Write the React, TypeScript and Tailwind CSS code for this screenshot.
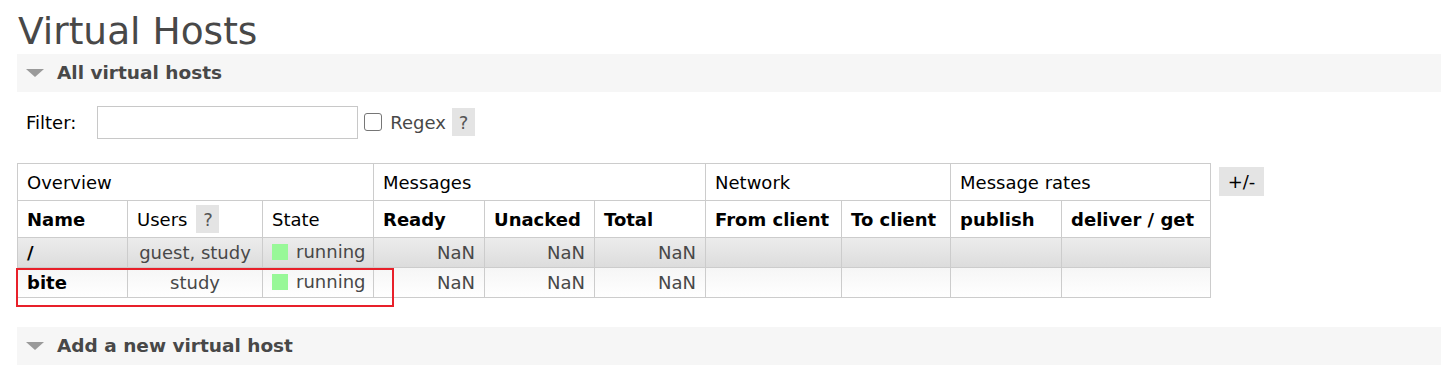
import React from "react";

const font = { fontFamily: '"DejaVu Sans", Verdana, sans-serif' };

const cols = [110, 135, 111, 111, 110, 111, 136, 109, 111, 149];

const groups = [
  { label: "Overview", span: 3 },
  { label: "Messages", span: 3 },
  { label: "Network", span: 2 },
  { label: "Message rates", span: 2 },
];

const rows = [
  { name: "/", users: "guest, study", alt: true },
  { name: "bite", users: "study", alt: false },
];

function Help() {
  return (
    <span className="inline-flex items-center justify-center w-[23px] h-[28px] bg-[#e4e4e4] text-[#555] text-[18px]">
      ?
    </span>
  );
}

function Section({ title }: { title: string }) {
  return (
    <div className="h-[38px] bg-[#f6f6f6] flex items-center">
      <span className="ml-[9px] w-0 h-0 border-l-[9px] border-r-[9px] border-t-[8px] border-l-transparent border-r-transparent border-t-[#9a9a9a]" />
      <span className="ml-[13px] text-[18.5px] font-bold text-[#484848]">{title}</span>
    </div>
  );
}

export default function App() {
  const cell = "border border-[#cccccc] px-[9px] whitespace-nowrap";
  return (
    <div className="bg-white w-[1441px] h-[365px] overflow-hidden pl-[17px] pt-[10px]" style={font}>
      <h1 className="text-[37.5px] leading-[43px] text-[#484848] pl-[1px] mb-[1px]">Virtual Hosts</h1>
      <Section title="All virtual hosts" />

      {/* filter */}
      <div className="flex items-center h-[34px] mt-[13px] text-[18px]">
        <span className="ml-[9px] text-black">Filter:</span>
        <span className="ml-[21px] w-[261px] h-[33px] border border-[#c8c8c8] bg-white" />
        <span className="ml-[6px] w-[18px] h-[18px] border border-[#767676] rounded-[3px] bg-white" />
        <span className="ml-[8px] text-[#484848]">Regex</span>
        <span className="ml-[6px] flex items-center">
          <Help />
        </span>
      </div>

      {/* table */}
      <div className="flex items-start mt-[24px]">
        <div className="relative">
          <table className="table-fixed border-collapse text-[18px] w-[1193px]">
            <colgroup>
              {cols.map((w, i) => (
                <col key={i} style={{ width: w }} />
              ))}
            </colgroup>
            <thead>
              <tr className="h-[37px]">
                {groups.map((g) => (
                  <th key={g.label} colSpan={g.span} className={`${cell} text-left font-normal text-black`}>
                    {g.label}
                  </th>
                ))}
              </tr>
              <tr className="h-[37px]">
                <th className={`${cell} text-left font-bold text-black`}>Name</th>
                <th className={`${cell} text-left font-normal text-black`}>
                  <span className="inline-flex items-center gap-[9px]">
                    Users <Help />
                  </span>
                </th>
                <th className={`${cell} text-left font-normal text-black`}>State</th>
                {["Ready", "Unacked", "Total", "From client", "To client", "publish", "deliver / get"].map((h) => (
                  <th key={h} className={`${cell} text-left font-bold text-black`}>
                    {h}
                  </th>
                ))}
              </tr>
            </thead>
            <tbody>
              {rows.map((r) => (
                <tr
                  key={r.name}
                  className={`h-[30px] ${r.alt ? "bg-gradient-to-b from-[#ececec] to-[#dcdcdc]" : "bg-gradient-to-b from-[#f6f6f6] to-[#ffffff]"}`}
                >
                  <td className={`${cell} font-bold text-black`}>{r.name}</td>
                  <td className={`${cell} text-center text-[#484848]`}>{r.users}</td>
                  <td className={`${cell} px-[8px] text-[#484848]`}>
                    <span className="inline-flex items-center gap-[8px]">
                      <span className="w-[16px] h-[16px] bg-[#98f898]" />
                      running
                    </span>
                  </td>
                  <td className={`${cell} text-right text-[#484848]`}>NaN</td>
                  <td className={`${cell} text-right text-[#484848]`}>NaN</td>
                  <td className={`${cell} text-right text-[#484848]`}>NaN</td>
                  <td className={cell} />
                  <td className={cell} />
                  <td className={cell} />
                  <td className={cell} />
                </tr>
              ))}
            </tbody>
          </table>
          {/* annotation box */}
          <div className="absolute left-[-1px] top-[105px] w-[378px] h-[39px] border-2 border-[#e8202a] pointer-events-none" />
        </div>
        <span className="ml-[8px] mt-[4px] w-[45px] h-[29px] bg-[#e4e4e4] flex items-center justify-center text-[18px] text-black">
          +/-
        </span>
      </div>

      <div className="mt-[29px]">
        <Section title="Add a new virtual host" />
      </div>
    </div>
  );
}
